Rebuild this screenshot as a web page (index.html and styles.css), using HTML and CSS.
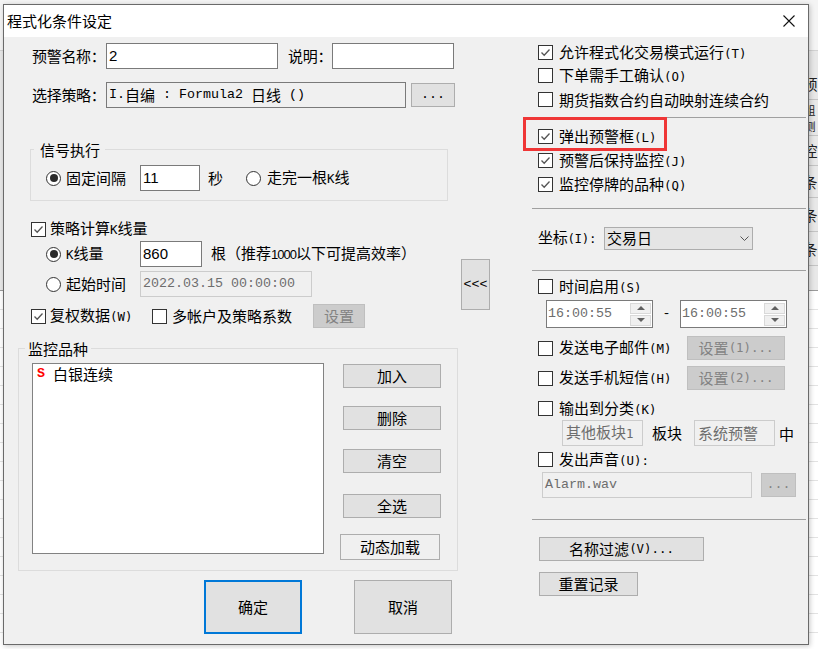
FILE: index.html
```html
<!DOCTYPE html>
<html lang="zh-CN">
<head>
<meta charset="utf-8">
<title>程式化条件设定</title>
<link rel="stylesheet" href="styles.css">
</head>
<body>
<div class="backdrop">
  <div class="bd-top"></div>
  <div class="bd-band">
    <div class="bdc c1">预</div>
    <div class="bdc c2">组<br>测</div>
    <div class="bdc c3">控</div>
    <div class="bdc c4">条</div>
    <div class="bdc c5">条</div>
    <div class="bdc c6">条</div>
  </div>
  <div class="bd-grid"></div>
</div>

<div class="dialog">
  <div class="titlebar">
    <span class="title">程式化条件设定</span>
    <svg class="close" viewBox="0 0 12 12"><path d="M0.5 0.5 L11.5 11.5 M11.5 0.5 L0.5 11.5"/></svg>
  </div>
  <div class="client">
    <div class="left">
      <div class="row l-name">
        <span class="lbl lw74">预警名称：</span>
        <div class="input w172"><span class="num">2</span></div>
        <span class="lbl lw44 ml10">说明：</span>
        <div class="input w122"></div>
      </div>
      <div class="row l-strat">
        <span class="lbl lw74">选择策略：</span>
        <div class="input ro w300"><span class="m">I.</span>自编<span class="m">&nbsp;:&nbsp;Formula2&nbsp;</span>日线<span class="m">&nbsp;()</span></div>
        <div class="btn w44 h24 ml5"><span class="m">...</span></div>
      </div>
      <div class="gbox g1">
        <span class="gtitle">信号执行</span>
        <div class="row g1-row">
          <span class="rb on"></span><span class="rlbl">固定间隔</span>
          <div class="input w60"><span class="num">11</span></div>
          <span class="sec">秒</span>
          <span class="rb"></span><span class="rt6">走完一根<span class="h">K</span>线</span>
        </div>
      </div>
      <div class="row l-kchk">
        <span class="cb"><svg viewBox="0 0 13 13"><path d="M2.5 6.5 L5.2 9.3 L10.5 3.5"/></svg></span><span class="ct">策略计算<span class="h">K</span>线量</span>
      </div>
      <div class="row l-kline">
        <span class="rb on"></span><span class="rlbl"><span class="h">K</span>线量</span>
        <div class="input w62"><span class="num">860</span></div>
        <span class="ml9">根（推荐<span class="n6">1000</span>以下可提高效率）</span>
      </div>
      <div class="row l-start">
        <span class="rb"></span><span class="rlbl">起始时间</span>
        <div class="input dis w172"><span class="m gray">2022.03.15 00:00:00</span></div>
      </div>
      <div class="row l-fq">
        <div class="item w121"><span class="cb"><svg viewBox="0 0 13 13"><path d="M2.5 6.5 L5.2 9.3 L10.5 3.5"/></svg></span><span class="ct">复权数据<span class="h">(W)</span></span></div>
        <div class="item w161"><span class="cb"></span><span class="ct5">多帐户及策略系数</span></div>
        <div class="btn dis w52 h24">设置</div>
      </div>
      <div class="gbox g2">
        <span class="gtitle">监控品种</span>
        <div class="g2-body">
          <div class="list">
            <div class="li"><span class="sym">S</span><span class="lname">白银连续</span></div>
          </div>
          <div class="bcol">
            <div class="btn w98 h24 b1">加入</div>
            <div class="btn w98 h24 b2">删除</div>
            <div class="btn w98 h24 b3">清空</div>
            <div class="btn w98 h24 b4">全选</div>
            <div class="btn light w100 h26 b5">动态加载</div>
          </div>
        </div>
      </div>
      <div class="row l-ok">
        <div class="btn def w98 h54">确定</div>
        <div class="btn w98 h54 ml52">取消</div>
      </div>
    </div>

    <div class="mid">
      <div class="btn back"><span class="m">&lt;&lt;&lt;</span></div>
    </div>

    <div class="right">
      <div class="row rr mt4"><span class="cb"><svg viewBox="0 0 13 13"><path d="M2.5 6.5 L5.2 9.3 L10.5 3.5"/></svg></span><span class="t">允许程式化交易模式运行<span class="h">(T)</span></span></div>
      <div class="row rr"><span class="cb"></span><span class="t">下单需手工确认<span class="h">(O)</span></span></div>
      <div class="row rr mt1"><span class="cb"></span><span class="t">期货指数合约自动映射连续合约</span></div>
      <div class="sep mt6"></div>
      <div class="row rr mt7"><span class="cb"><svg viewBox="0 0 13 13"><path d="M2.5 6.5 L5.2 9.3 L10.5 3.5"/></svg></span><span class="t">弹出预警框<span class="h">(L)</span></span></div>
      <div class="row rr mt1"><span class="cb"><svg viewBox="0 0 13 13"><path d="M2.5 6.5 L5.2 9.3 L10.5 3.5"/></svg></span><span class="t">预警后保持监控<span class="h">(J)</span></span></div>
      <div class="row rr mt1"><span class="cb"><svg viewBox="0 0 13 13"><path d="M2.5 6.5 L5.2 9.3 L10.5 3.5"/></svg></span><span class="t">监控停牌的品种<span class="h">(Q)</span></span></div>
      <div class="sep mt12"></div>
      <div class="row rr-axis">
        <span class="lbl lw66">坐标<span class="h">(I):</span></span>
        <div class="combo"><span>交易日</span><svg class="chev" viewBox="0 0 9 5"><path d="M0.5 0.5 L4.5 4.5 L8.5 0.5"/></svg></div>
      </div>
      <div class="sep mt20"></div>
      <div class="row rr mt4"><span class="cb"></span><span class="t">时间启用<span class="h">(S)</span></span></div>
      <div class="row rr-spin">
        <div class="spin"><span class="m gray">16:00:55</span><div class="sbs"><span class="sb"><i class="up"></i></span><span class="sb"><i class="dn"></i></span></div></div>
        <span class="dash m">-</span>
        <div class="spin"><span class="m gray">16:00:55</span><div class="sbs"><span class="sb"><i class="up"></i></span><span class="sb"><i class="dn"></i></span></div></div>
      </div>
      <div class="row rr-btn mt8">
        <div class="item w149"><span class="cb"></span><span class="t">发送电子邮件<span class="h">(M)</span></span></div>
        <div class="btn dis w98 h24">设置<span class="h">(1)...</span></div>
      </div>
      <div class="row rr-btn mt6">
        <div class="item w149"><span class="cb"></span><span class="t">发送手机短信<span class="h">(H)</span></span></div>
        <div class="btn dis w98 h24">设置<span class="h">(2)...</span></div>
      </div>
      <div class="row rr mt7"><span class="cb"></span><span class="t">输出到分类<span class="h">(K)</span></span></div>
      <div class="row rr-box">
        <div class="input dis w81 h26"><span class="gray">其他板块<span class="h">1</span></span></div>
        <span class="blk">板块</span>
        <div class="input dis w81 h26"><span class="gray">系统预警</span></div>
        <span class="ml4 zh">中</span>
      </div>
      <div class="row rr mt2"><span class="cb"></span><span class="t">发出声音<span class="h">(U):</span></span></div>
      <div class="row rr-alarm">
        <div class="input dis w210 h25"><span class="m gray">Alarm.wav</span></div>
        <div class="btn dis w35 h24 ml9"><span class="m">...</span></div>
      </div>
      <div class="sep mt22"></div>
      <div class="row rr-b mt17"><div class="btn w165 h24">名称过滤<span class="h">(V)...</span></div></div>
      <div class="row rr-b mt11"><div class="btn w99 h24">重置记录</div></div>
      <div class="mark"></div>
    </div>
  </div>
</div>
</body>
</html>
```
FILE: styles.css
```css
* { box-sizing: border-box; }
html, body { margin: 0; padding: 0; }
body {
  width: 818px; height: 649px; overflow: hidden; position: relative;
  background: #ffffff;
  font-family: "Noto Sans CJK SC", "Noto Sans", sans-serif;
  font-size: 15px; color: #000;
}
.m { font-family: "Liberation Mono", "DejaVu Sans Mono", monospace; font-size: 13.33px; }
.h { font-family: "DejaVu Sans Mono", "Liberation Mono", monospace; font-size: 12.4px; }
.n6 { font-family: "Liberation Sans", Arial, sans-serif; font-size: 13px; letter-spacing: -1px; }
.num { font-family: "Liberation Sans", Arial, sans-serif; font-size: 15px; }
.gray { color: #6d6d6d; }

/* backdrop application behind the dialog */
.backdrop { width: 818px; height: 649px; display: flex; flex-direction: column; }
.bd-top { height: 51px; background: #f4f4f4; border-bottom: 1px solid #d2d2d2; flex: none; }
.bd-band { height: 240px; background: #e8e8e8; flex: none; display: flex; flex-direction: column; align-items: flex-end; padding-top: 17px; border-bottom: 1px solid #9a9a9a; }
.bdc { width: 16px; text-align: center; border-bottom: 1px solid #c4c4c4; color: #222; font-size: 15px; }
.c1 { height: 32px; line-height: 32px; }
.c2 { height: 36px; font-size: 11px; line-height: 16px; padding-top: 2px; }
.c3 { height: 30px; line-height: 30px; }
.c4 { height: 32px; line-height: 32px; }
.c5 { height: 34px; line-height: 34px; }
.c6 { height: 34px; line-height: 34px; }
.bd-grid { flex: 1; background: repeating-linear-gradient(to bottom, #ffffff 0 18px, #e2e2e2 18px 19px); }

/* dialog window */
.dialog {
  position: absolute; left: 3px; top: 4px; width: 806px; height: 641px;
  border: 1px solid #6a6a6a; background: #f0f0f0;
  display: flex; flex-direction: column;
  box-shadow: 1px 1px 5px rgba(0,0,0,0.22);
}
.titlebar { height: 32px; flex: none; background: #fff; display: flex; align-items: center; justify-content: space-between; padding: 0 13px 0 3px; }
.title { font-size: 15px; line-height: 20px; }
.close { width: 12px; height: 12px; fill: none; stroke: #111; stroke-width: 1.1; }
.client { flex: 1; display: flex; }
.left { width: 457px; flex: none; display: flex; flex-direction: column; }
.mid { width: 29px; flex: none; }
.right { width: 318px; flex: none; position: relative; display: flex; flex-direction: column; }

.row { display: flex; align-items: center; flex: none; white-space: nowrap; line-height: 18px; }
.lbl { flex: none; letter-spacing: -0.3px; }
.lw74 { width: 74px; }
.lw44 { width: 44px; }
.lw66 { width: 66px; }
.item { display: flex; align-items: center; flex: none; }

.ml4 { margin-left: 4px; } .ml5 { margin-left: 5px; } .ml9 { margin-left: 9px; }
.ml10 { margin-left: 10px; } .ml52 { margin-left: 52px; }
.mt1 { margin-top: 1px; } .mt2 { margin-top: 2px; } .mt4 { margin-top: 4px; } .mt6 { margin-top: 6px; } .mt7 { margin-top: 7px; }
.mt8 { margin-top: 8px; } .mt11 { margin-top: 11px; } .mt12 { margin-top: 12px; } .mt17 { margin-top: 17px; }
.mt20 { margin-top: 20px; } .mt22 { margin-top: 22px; }

.w35 { width: 35px; } .w44 { width: 44px; } .w52 { width: 52px; } .w60 { width: 60px; } .w62 { width: 62px; }
.w81 { width: 81px; } .w98 { width: 98px; } .w99 { width: 99px; } .w100 { width: 100px; } .w121 { width: 121px; }
.w122 { width: 122px; } .w149 { width: 149px; } .w161 { width: 161px; } .w165 { width: 165px; } .w172 { width: 172px; }
.w210 { width: 210px; } .w300 { width: 300px; }
.h24 { height: 24px; } .h25 { height: 25px; } .h26 { height: 26px; } .h54 { height: 54px; }

/* controls */
.input { height: 26px; flex: none; border: 1px solid #7a7a7a; background: #fff; display: flex; align-items: center; padding-left: 2px; overflow: hidden; white-space: pre; }
.input.ro { background: #f0f0f0; }
.input.dis { background: #f0f0f0; border-color: #cccccc; }
.btn { flex: none; display: flex; align-items: center; justify-content: center; background: #e1e1e1; border: 1px solid #adadad; line-height: 18px; white-space: pre; }
.btn.dis { background: #cccccc; border-color: #bfbfbf; color: #838383; }
.btn.light { background: #f0f0f0; }
.btn.def { border: 2px solid #0078d7; }
.back { width: 29px; height: 51px; margin-top: 222px; }

.cb { width: 15px; height: 15px; flex: none; border: 1px solid #333; background: #fff; display: flex; }
.cb svg { width: 13px; height: 13px; fill: none; stroke: #555; stroke-width: 1.3; }
.rb { width: 15px; height: 15px; flex: none; border: 1px solid #333; border-radius: 50%; background: #fff; display: flex; align-items: center; justify-content: center; }
.rb.on::after { content: ""; width: 8px; height: 8px; border-radius: 50%; background: #2b2b2b; }
.ct { margin-left: 4px; }
.ct5 { margin-left: 5px; }
.rt6 { margin-left: 6px; }
.rlbl { margin-left: 5px; width: 74px; flex: none; }
.sec { margin-left: 8px; width: 38px; flex: none; }
.blk { margin-left: 9px; width: 42px; flex: none; }

/* group boxes */
.gbox { flex: none; border: 1px solid #dcdcdc; }
.gtitle { display: block; width: max-content; height: 20px; line-height: 20px; margin-top: -10px; background: #f0f0f0; }
.g1 { margin: 41px 0 0 26px; width: 418px; height: 52px; }
.g1 .gtitle { margin-left: 3px; padding: 0 5px 0 6px; }
.g1-row { margin: 5px 0 0 15px; height: 26px; }
.g2 { margin: 20px 0 0 14px; width: 440px; height: 223px; }
.g2 .gtitle { margin-left: 6px; padding: 0 3px; }
.g2-body { display: flex; margin: 4px 0 0 13px; }
.list { width: 292px; height: 191px; flex: none; border: 1px solid #828282; background: #fff; padding: 1px 0 0 4px; }
.li { display: flex; align-items: center; height: 18px; line-height: 18px; }
.sym { font-family: "Liberation Mono", monospace; font-weight: bold; font-size: 13.33px; color: #ff0000; width: 8px; }
.lname { margin-left: 8px; }
.bcol { display: flex; flex-direction: column; margin-left: 19px; }
.b1 { margin-top: 1px; } .b2 { margin-top: 18px; } .b3 { margin-top: 19px; } .b4 { margin-top: 21px; }
.b5 { margin-top: 16px; margin-left: -3px; }

/* left rows */
.l-name { margin: 6px 0 0 28px; height: 26px; }
.l-strat { margin: 13px 0 0 28px; height: 26px; }
.l-kchk { margin: 19px 0 0 27px; height: 18px; }
.l-kline { margin: 3px 0 0 42px; height: 26px; }
.l-start { margin: 4px 0 0 42px; height: 26px; }
.l-fq { margin: 7px 0 0 27px; height: 24px; }
.l-ok { margin: 9px 0 0 200px; height: 54px; }

/* right rows */
.rr { margin-left: 48px; height: 23px; }
.rr .t, .rr-btn .t { margin-left: 6px; }
.sep { flex: none; height: 1px; width: 274px; margin-left: 42px; background: #a0a0a0; }
.rr-axis { margin: 17px 0 0 48px; height: 24px; }
.combo { width: 149px; height: 23px; flex: none; background: #e5e5e5; border: 1px solid #adadad; display: flex; align-items: center; justify-content: space-between; padding: 0 3px 0 2px; }
.chev { width: 9px; height: 5px; fill: none; stroke: #555; stroke-width: 1; }
.rr-spin { margin: 2px 0 0 56px; height: 28px; }
.spin { width: 107px; height: 28px; flex: none; border: 1px solid #7a7a7a; background: #fff; display: flex; align-items: center; padding-left: 1px; }
.sbs { margin-left: auto; margin-right: 1px; width: 21px; height: 23px; display: flex; flex-direction: column; gap: 1px; }
.sb { flex: 1; background: #f0f0f0; border: 1px solid #d9d9d9; display: flex; align-items: center; justify-content: center; }
.up { width: 0; height: 0; border-left: 4px solid transparent; border-right: 4px solid transparent; border-bottom: 4px solid #606060; }
.dn { width: 0; height: 0; border-left: 4px solid transparent; border-right: 4px solid transparent; border-top: 4px solid #606060; }
.dash { width: 27px; text-align: center; flex: none; }
.rr-btn { margin-left: 48px; height: 24px; }
.rr-box { margin-left: 72px; height: 26px; }
.rr-box .input { padding-left: 3px; }
.zh { padding-top: 2px; }
.rr-alarm { margin: 1px 0 0 52px; height: 25px; }
.rr-b { margin-left: 49px; height: 24px; }

/* red annotation frame over the option */
.mark { position: absolute; left: 33px; top: 80px; width: 144px; height: 34px; border: 3px solid #ef3636; }
```
